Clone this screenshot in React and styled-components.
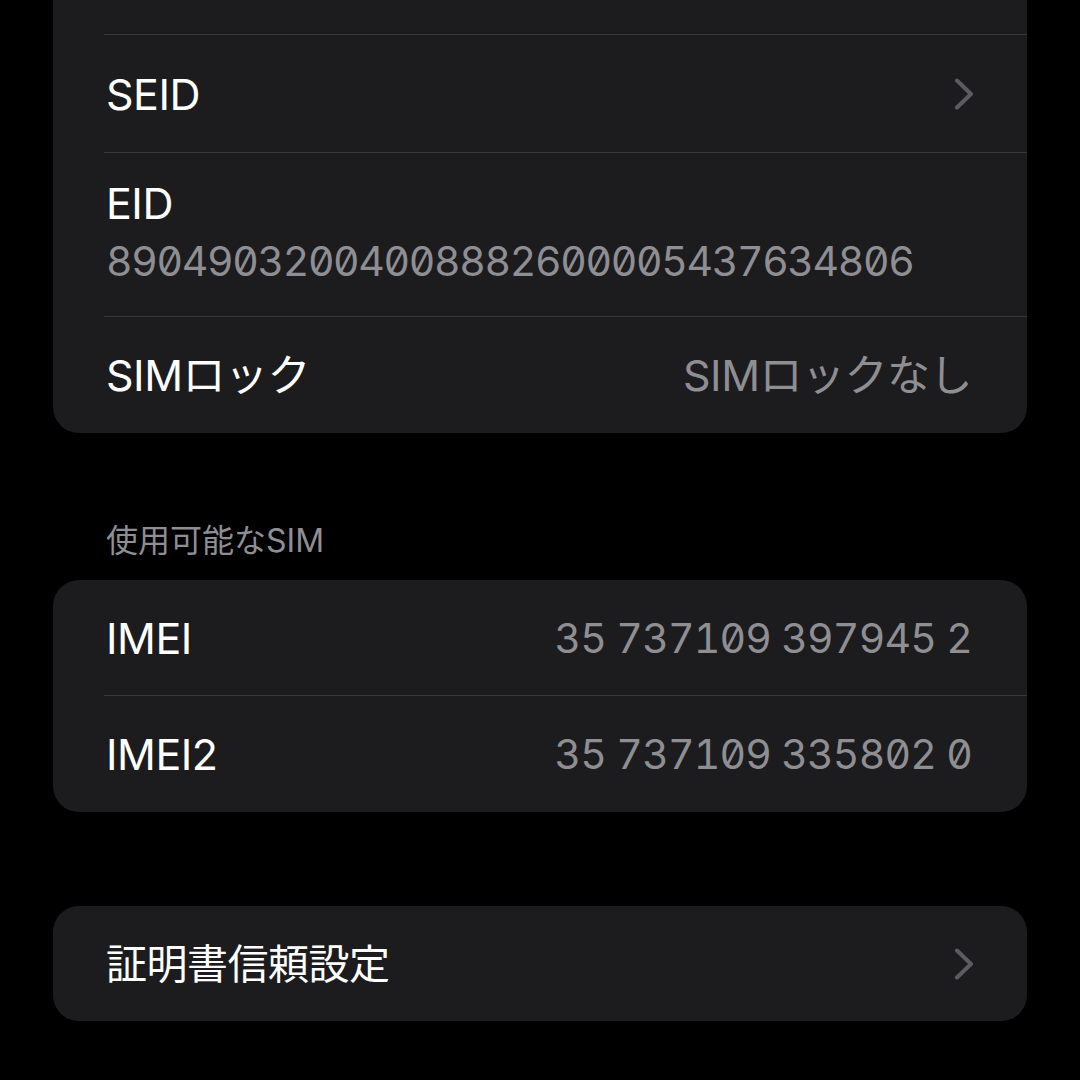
import styled, { createGlobalStyle } from "styled-components";

const GlobalStyle = createGlobalStyle`
  html, body {
    margin: 0;
    background: #000;
  }
  body {
    font-family: Inter, "Noto Sans CJK JP", sans-serif;
    -webkit-font-smoothing: antialiased;
  }
`;

const Page = styled.div`
  width: 1080px;
  height: 1080px;
  overflow: hidden;
  padding: 0 53px;
  box-sizing: border-box;
  display: flex;
  flex-direction: column;
`;

const Group = styled.div`
  background: #1c1c1e;
  border-radius: ${(p) => (p.$cut ? "0 0 26px 26px" : "26px")};
  margin-top: ${(p) => p.$gap || 0}px;
  overflow: hidden;
`;

const Row = styled.div`
  box-sizing: border-box;
  height: ${(p) => p.$h}px;
  margin-left: 51px;
  padding: 0 55px 0 2px;
  display: flex;
  align-items: center;
  justify-content: space-between;

  & + & {
    border-top: 1px solid #38383a;
  }
`;

const StackRow = styled(Row)`
  flex-direction: column;
  align-items: flex-start;
  justify-content: flex-start;
  padding-top: 22px;
`;

const Label = styled.span`
  color: #fff;
  font-size: ${(p) => p.$size || 43}px;
  line-height: 56px;
  letter-spacing: -0.5px;
`;

const Value = styled.span`
  color: #8e8e93;
  font-size: ${(p) => (p.$mono ? 41 : 43)}px;
  line-height: 56px;
  letter-spacing: ${(p) => (p.$mono ? "-0.8px" : "-0.5px")};
  font-feature-settings: ${(p) => (p.$mono ? '"tnum", "zero"' : "normal")};
`;

const Eid = styled.span`
  color: #8e8e93;
  font-size: 41px;
  line-height: 60px;
  letter-spacing: -1.35px;
  white-space: nowrap;
  font-feature-settings: "tnum", "zero";
`;

const Header = styled.div`
  padding: 89px 0 21px 53px;
  color: #8e8e93;
  font-size: 32px;
  line-height: 37px;
`;

const ChevronBox = styled.svg`
  display: block;
  margin-right: -2px;
`;

const Chevron = () => (
  <ChevronBox width="20" height="32" viewBox="0 0 20 32" fill="none">
    <path
      d="M3 2.5 L17 16 L3 29.5"
      stroke="#5c5c60"
      strokeWidth="4"
      strokeLinecap="round"
      strokeLinejoin="round"
    />
  </ChevronBox>
);

export default function App() {
  return (
    <>
      <GlobalStyle />
      <Page>
        <Group $cut>
          <Row $h={34} />
          <Row $h={118}>
            <Label>SEID</Label>
            <Chevron />
          </Row>
          <StackRow $h={164}>
            <Label>EID</Label>
            <Eid>89049032004008882600005437634806</Eid>
          </StackRow>
          <Row $h={117}>
            <Label>SIMロック</Label>
            <Value>SIMロックなし</Value>
          </Row>
        </Group>

        <Header>使用可能なSIM</Header>
        <Group>
          <Row $h={115}>
            <Label>IMEI</Label>
            <Value $mono>35 737109 397945 2</Value>
          </Row>
          <Row $h={117}>
            <Label>IMEI2</Label>
            <Value $mono>35 737109 335802 0</Value>
          </Row>
        </Group>

        <Group $gap={94}>
          <Row $h={115}>
            <Label $size={41}>証明書信頼設定</Label>
            <Chevron />
          </Row>
        </Group>
      </Page>
    </>
  );
}
